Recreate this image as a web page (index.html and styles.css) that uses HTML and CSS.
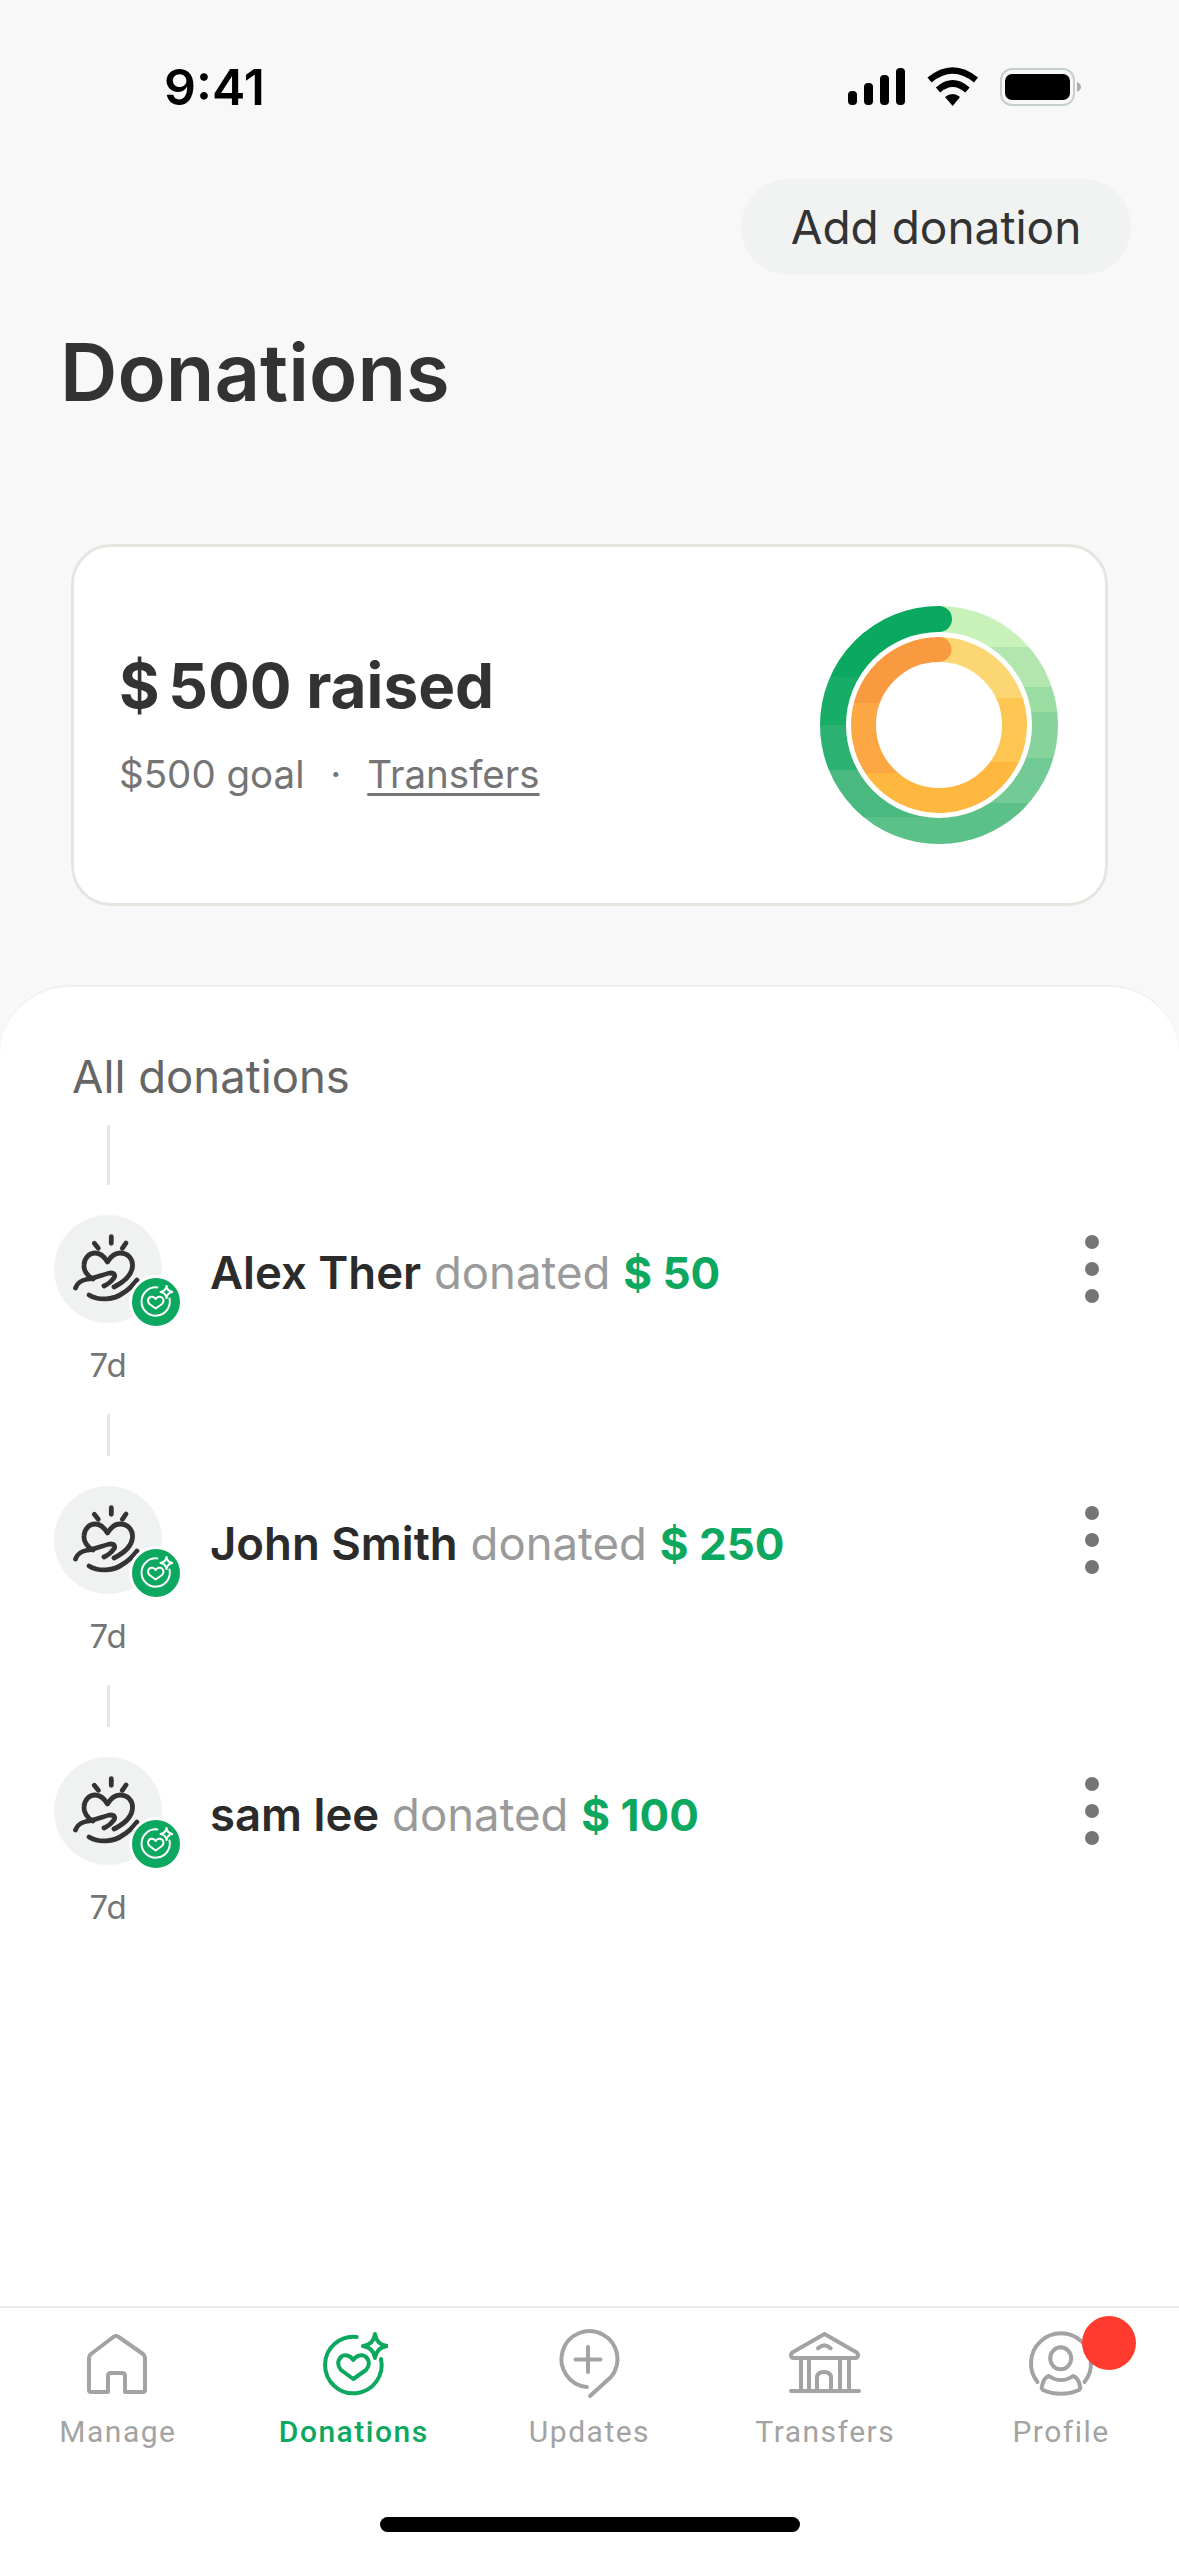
FILE: index.html
```html
<!DOCTYPE html>
<html lang="en">
<head>
    <meta charset="UTF-8">
    <meta name="viewport" content="width=device-width, initial-scale=1.0">
    <title>Donations</title>
    <link rel="stylesheet" href="styles.css">
</head>
<body>
    <!-- Shared icons -->
    <svg class="defs">
        <symbol id="heartStar" viewBox="0 0 68 68">
            <path d="M36.7 4.9A28.3 28.3 0 1 0 61 27"/>
            <path d="M55 2Q56.5 12.500 67 14Q56.500 15.500 55 26Q53.500 15.500 43 14Q53.500 12.500 55 2Z"/>
            <path d="M33.300 28C30 23 24 22 21 25C17 29 17.500 34 21 38L33.300 47L46 38C49.500 34 50 29 46 25C42.500 22 36.500 23 33.300 28Z"/>
        </symbol>
        <symbol id="handHeart" viewBox="0 0 108 108">
            <path class="hand-stroke" d="M57.300 21.700V28.300M40.300 28.300L44.300 33.300M72 28L68.300 33.300"/>
            <path class="hand-stroke" d="M39 64C33 61 29.500 55 30 50C30.500 42 36 38 41 38C46 38 50 41 53.500 47C57 41 61 38 66 38C74 38 79 44 78.500 51C78 60 70 67 60 72"/>
            <path class="hand-stroke" d="M21.500 73C23 68 28 65 34 64C42 63 50 59 56 58C61 58 62 61 59 64C57 67 54 69 50 71"/>
            <path class="hand-stroke" d="M35 80C45 86 60 85 69 78C75 75 79 70 83 65"/>
        </symbol>
    </svg>

    <!-- Status bar -->
    <div class="status-bar">
        <span class="clock">9:41</span>
        <div class="status-icons">
            <svg class="signal" viewBox="0 0 58 37">
                <rect x="0" y="23" width="9" height="14" rx="4"/>
                <rect x="16" y="15" width="9" height="22" rx="4"/>
                <rect x="32" y="7" width="9" height="30" rx="4"/>
                <rect x="48" y="0" width="9" height="37" rx="4"/>
            </svg>
            <svg class="wifi" viewBox="0 0 54 42">
                <path class="wifi-arc" d="M3.500 14Q26.700 -5 50 14"/>
                <path class="wifi-arc" d="M12 24Q26.700 11 41.500 24"/>
                <path d="M19 31Q26.700 25 34 31L26.700 40Z"/>
            </svg>
            <svg class="battery" viewBox="0 0 81 38">
                <rect class="battery-edge" x="1" y="1" width="73" height="36" rx="11"/>
                <rect x="5" y="6" width="65" height="26" rx="7"/>
                <path class="battery-nib" d="M77 14Q81 16 81 19Q81 22 77 24Z"/>
            </svg>
        </div>
    </div>

    <div class="top-actions">
        <button class="add-button">Add donation</button>
    </div>

    <h1 class="page-title">Donations</h1>

    <!-- Summary -->
    <section class="summary-card">
        <div>
            <div class="raised"><span class="currency">$ </span>500 raised</div>
            <div class="goal">
                <span>$500 goal</span>
                <span class="goal-dot">&middot;</span>
                <a class="goal-link" href="#">Transfers</a>
            </div>
        </div>
        <svg class="ring" viewBox="0 0 250 250">
            <defs>
                <linearGradient id="outerRight" gradientUnits="userSpaceOnUse" x1="0" y1="5" x2="0" y2="245">
                    <stop offset="0.176" stop-color="#c9f1ba"/><stop offset="0.176" stop-color="#b2e6ae"/>
                    <stop offset="0.34" stop-color="#b2e6ae"/><stop offset="0.34" stop-color="#9bdca3"/>
                    <stop offset="0.445" stop-color="#9bdca3"/><stop offset="0.445" stop-color="#88d39c"/>
                    <stop offset="0.639" stop-color="#88d39c"/><stop offset="0.639" stop-color="#72ca94"/>
                    <stop offset="0.826" stop-color="#72ca94"/><stop offset="0.826" stop-color="#5cc189"/>
                </linearGradient>
                <linearGradient id="outerLeft" gradientUnits="userSpaceOnUse" x1="0" y1="5" x2="0" y2="245">
                    <stop offset="0.299" stop-color="#0aa95f"/><stop offset="0.299" stop-color="#18ad67"/>
                    <stop offset="0.5" stop-color="#18ad67"/><stop offset="0.5" stop-color="#2bb273"/>
                    <stop offset="0.688" stop-color="#2bb273"/><stop offset="0.688" stop-color="#49b97f"/>
                    <stop offset="0.882" stop-color="#49b97f"/><stop offset="0.882" stop-color="#5cc189"/>
                </linearGradient>
                <linearGradient id="innerRight" gradientUnits="userSpaceOnUse" x1="0" y1="36" x2="0" y2="214">
                    <stop offset="0.35" stop-color="#fbd673"/><stop offset="0.35" stop-color="#fdc551"/>
                    <stop offset="0.706" stop-color="#fdc551"/><stop offset="0.706" stop-color="#ffb83f"/>
                </linearGradient>
                <linearGradient id="innerLeft" gradientUnits="userSpaceOnUse" x1="0" y1="36" x2="0" y2="214">
                    <stop offset="0.376" stop-color="#f99a40"/><stop offset="0.376" stop-color="#fba743"/>
                    <stop offset="0.77" stop-color="#fba743"/><stop offset="0.77" stop-color="#ffb83f"/>
                </linearGradient>
            </defs>
            <path class="ring-outer" stroke="url(#outerRight)" d="M125 19A106 106 0 0 1 125 231"/>
            <path class="ring-outer" stroke="url(#outerLeft)" d="M125 231A106 106 0 0 1 125 19"/>
            <path class="ring-inner" stroke="url(#innerRight)" d="M125 49.500A75.500 75.500 0 0 1 125 200.500"/>
            <path class="ring-inner" stroke="url(#innerLeft)" d="M125 200.500A75.500 75.500 0 0 1 125 49.500"/>
        </svg>
    </section>

    <!-- Donation list -->
    <section class="sheet">
        <h2 class="sheet-title">All donations</h2>

        <div class="donation">
            <div class="timeline-line timeline-line-first"></div>
            <div class="donation-row">
                <div class="avatar">
                    <svg class="hand-icon"><use href="#handHeart"/></svg>
                    <span class="avatar-badge"><svg class="badge-icon"><use href="#heartStar"/></svg></span>
                </div>
                <p class="donation-text"><b>Alex Ther</b> <span class="muted">donated</span> <strong>$ 50</strong></p>
                <div class="kebab"><i></i><i></i><i></i></div>
            </div>
            <div class="time-ago">7d</div>
        </div>

        <div class="donation">
            <div class="timeline-line"></div>
            <div class="donation-row">
                <div class="avatar">
                    <svg class="hand-icon"><use href="#handHeart"/></svg>
                    <span class="avatar-badge"><svg class="badge-icon"><use href="#heartStar"/></svg></span>
                </div>
                <p class="donation-text"><b>John Smith</b> <span class="muted">donated</span> <strong>$ 250</strong></p>
                <div class="kebab"><i></i><i></i><i></i></div>
            </div>
            <div class="time-ago">7d</div>
        </div>

        <div class="donation">
            <div class="timeline-line"></div>
            <div class="donation-row">
                <div class="avatar">
                    <svg class="hand-icon"><use href="#handHeart"/></svg>
                    <span class="avatar-badge"><svg class="badge-icon"><use href="#heartStar"/></svg></span>
                </div>
                <p class="donation-text"><b>sam lee</b> <span class="muted">donated</span> <strong>$ 100</strong></p>
                <div class="kebab"><i></i><i></i><i></i></div>
            </div>
            <div class="time-ago">7d</div>
        </div>
    </section>

    <!-- Tab bar -->
    <nav class="tab-bar">
        <div class="tabs">
            <a class="tab" href="#">
                <svg class="tab-icon" viewBox="0 0 68 68">
                    <path d="M7 22Q5 24 5 26V58Q5 60 7 60H24V44Q24 41 27 41H38Q41 41 41 44V60H59Q61 60 61 58V26Q61 24 59 22L34 4.500Q32 3.500 30 4.500Z"/>
                </svg>
                <span>Manage</span>
            </a>
            <a class="tab tab-active" href="#">
                <svg class="tab-icon"><use href="#heartStar"/></svg>
                <span>Donations</span>
            </a>
            <a class="tab" href="#">
                <svg class="tab-icon" viewBox="0 0 68 68">
                    <path d="M32 55A28 28 0 1 1 56 45L35 64"/>
                    <path d="M33 15V40M20.500 27.500H45.500"/>
                </svg>
                <span>Updates</span>
            </a>
            <a class="tab" href="#">
                <svg class="tab-icon" viewBox="0 0 68 68">
                    <path d="M33.500 2L3 19.500Q0 21 0 23Q0 26 3 26H64Q67 26 67 23Q67 21 64 19.500Z"/>
                    <path d="M27 16.300Q33.300 10.500 39.600 16.300"/>
                    <path d="M10 26V59M18 26V59M49 26V59M58 26V59"/>
                    <path d="M26 59V46Q26 40 33 40Q40 40 40 46V59"/>
                    <path d="M0 59H68"/>
                </svg>
                <span>Transfers</span>
            </a>
            <a class="tab" href="#">
                <span class="tab-icon-wrap">
                    <svg class="tab-icon" viewBox="0 0 68 68">
                        <path d="M10.500 50A30 30 0 1 1 57.500 50"/>
                        <ellipse cx="33.700" cy="26.300" rx="10.500" ry="11"/>
                        <path d="M15 54C16 49 19 45 22 44C26 47 30 48 34 48C38 48 42 47 46 44C49 45 52 49 53 54C54 56 53 57 52 58C41 63 27 63 16 58C15 57 14 56 15 54Z"/>
                    </svg>
                    <span class="red-dot"></span>
                </span>
                <span>Profile</span>
            </a>
        </div>
        <div class="home-bar"></div>
    </nav>
</body>
</html>
```

FILE: styles.css
```css
* {
    box-sizing: border-box;
}

body {
    font-family: Inter, "Liberation Sans", sans-serif;
    margin: 0;
    width: 1179px;
    height: 2556px;
    display: flex;
    flex-direction: column;
    background-color: #f8f8f8;
    color: #333;
    overflow: hidden;
}

.defs {
    display: none;
}

symbol path {
    fill: none;
    stroke: currentColor;
    stroke-linecap: round;
    stroke-linejoin: round;
    stroke-width: 4;
}

symbol path.hand-stroke {
    stroke-width: 4.800;
}

/* Status bar */
.status-bar {
    height: 179px;
    padding: 61px 98px 0 164px;
    display: flex;
    justify-content: space-between;
    align-items: flex-start;
}

.clock {
    font-size: 50px;
    line-height: 52px;
    font-weight: 600;
    color: #000;
}

.status-icons {
    display: flex;
    align-items: flex-start;
    gap: 20px;
    padding-top: 7px;
}

.signal {
    width: 58px;
    height: 37px;
}

.wifi {
    width: 54px;
    height: 42px;
    margin-top: -2px;
}

.wifi-arc {
    fill: none;
    stroke: #000;
    stroke-width: 6.5;
}

.battery {
    width: 81px;
    height: 38px;
}

.battery-edge {
    fill: none;
    stroke: #c5d0cc;
    stroke-width: 2;
}

.battery-nib {
    fill: #a9aeac;
}

/* Header */
.top-actions {
    display: flex;
    justify-content: flex-end;
    padding-right: 48px;
}

.add-button {
    height: 96px;
    width: 390px;
    border: none;
    border-radius: 48px;
    background-color: #f1f3f2;
    color: #333;
    font-family: inherit;
    font-size: 46px;
    padding: 0;
}

.page-title {
    margin: 49px 0 0 60px;
    font-size: 79.5px;
    line-height: 96px;
    font-weight: 600;
}

/* Summary card */
.summary-card {
    margin: 124px 71px 0;
    height: 362px;
    padding: 0 41px 0 45px;
    display: flex;
    justify-content: space-between;
    align-items: center;
    background-color: white;
    border: 3px solid #e6e6e0;
    border-radius: 40px;
}

.raised {
    font-size: 62px;
    line-height: 76px;
    font-weight: 700;
}

.currency {
    word-spacing: -6px;
}

.goal {
    margin: 27px 0 5px;
    font-size: 38.5px;
    line-height: 46px;
    color: #757575;
}

.goal-dot {
    margin: 0 15px;
}

.goal-link {
    color: #757575;
    text-underline-offset: 5px;
}

.ring {
    width: 250px;
    height: 250px;
}

.ring-outer {
    fill: none;
    stroke-width: 26;
    stroke-linecap: round;
}

.ring-inner {
    fill: none;
    stroke-width: 25;
    stroke-linecap: round;
}

/* Donation list */
.sheet {
    flex: 1;
    margin-top: 79px;
    padding: 60px 80px 0 54px;
    background-color: white;
    border-top: 2px solid #f0f0f0;
    border-radius: 70px 70px 0 0;
}

.sheet-title {
    margin: 0 0 18px 18px;
    font-size: 45.5px;
    line-height: 60px;
    font-weight: 400;
    color: #666;
}

.timeline-line {
    width: 3px;
    height: 42px;
    margin: 0 0 30px 53px;
    background-color: #e3e8e6;
}

.timeline-line-first {
    height: 60px;
}

.donation-row {
    display: flex;
    align-items: center;
    gap: 48px;
}

.avatar {
    position: relative;
    flex: none;
    width: 108px;
    height: 108px;
    border-radius: 50%;
    background-color: #f0f2f1;
    color: #333;
}

.hand-icon {
    display: block;
    width: 108px;
    height: 108px;
}

.avatar-badge {
    position: absolute;
    left: 75px;
    top: 60px;
    width: 54px;
    height: 54px;
    display: flex;
    align-items: center;
    justify-content: center;
    border: 3px solid white;
    border-radius: 50%;
    background-color: #0ca85f;
    color: white;
}

.badge-icon {
    width: 34px;
    height: 34px;
}

.donation-text {
    margin: 7px 0 0;
    font-size: 45.5px;
    line-height: 52px;
    color: #2b2b2b;
}

.donation-text b {
    font-weight: 600;
}

.donation-text .muted {
    color: #9a9a9a;
}

.donation-text strong {
    font-size: 44px;
    font-weight: 700;
    color: #0ca85f;
}

.kebab {
    margin-left: auto;
    display: flex;
    flex-direction: column;
    gap: 13px;
}

.kebab i {
    display: block;
    width: 14px;
    height: 14px;
    border-radius: 50%;
    background-color: #757575;
}

.time-ago {
    width: 108px;
    margin: 22px 0 29px;
    text-align: center;
    font-size: 33px;
    line-height: 40px;
    color: #757575;
}

/* Tab bar */
.tab-bar {
    height: 250px;
    background-color: white;
    border-top: 2px solid #e6ebe9;
}

.tabs {
    display: grid;
    grid-template-columns: repeat(5, 1fr);
    padding-top: 24px;
}

.tab {
    display: flex;
    flex-direction: column;
    align-items: center;
    gap: 12px;
    font-family: Roboto, sans-serif;
    font-size: 30px;
    line-height: 40px;
    letter-spacing: 1.5px;
    color: #a3a3a3;
    text-decoration: none;
}

.tab-active {
    color: #0ca85f;
    font-weight: 500;
}

.tab-icon-wrap {
    position: relative;
    display: block;
    height: 68px;
}

.tab-icon {
    display: block;
    width: 68px;
    height: 68px;
    overflow: visible;
    fill: none;
    stroke: currentColor;
    stroke-width: 4;
    stroke-linecap: round;
    stroke-linejoin: round;
}

.red-dot {
    position: absolute;
    left: 55px;
    top: -16px;
    width: 54px;
    height: 54px;
    border-radius: 50%;
    background-color: #ff3b30;
}

.home-bar {
    width: 420px;
    height: 15px;
    margin: 65px auto 0;
    border-radius: 8px;
    background-color: #000;
}
```
